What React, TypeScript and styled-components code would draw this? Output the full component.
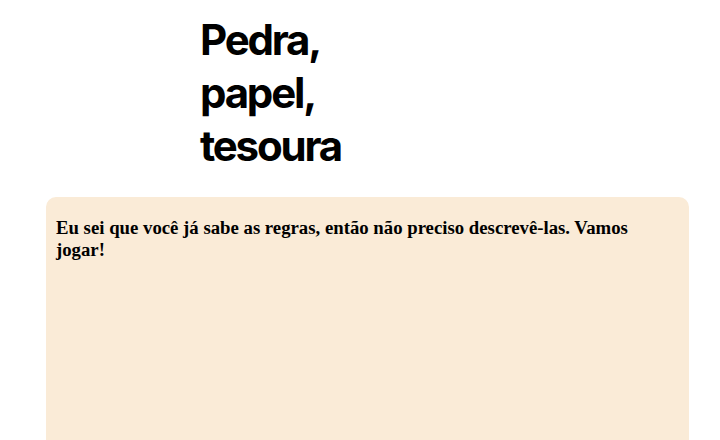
import styled, { createGlobalStyle } from 'styled-components';

const GlobalStyle = createGlobalStyle`
  body {
    margin: 0;
    background: #ffffff;
  }
`;

const Page = styled.main`
  display: flex;
  flex-direction: column;
  padding: 0 31px 0 46px;
`;

const Title = styled.h1`
  margin: 13px 0 0 154px;
  font-family: Inter, 'Liberation Sans', sans-serif;
  font-size: 42px;
  font-weight: 700;
  letter-spacing: -2.2px;
  line-height: 53px;
  color: #000;
`;

const Card = styled.section`
  margin-top: 25px;
  min-height: 240px;
  padding: 20px 10px 17px;
  background: #faebd7;
  border-radius: 10px;
`;

const Intro = styled.p`
  margin: 0;
  font-family: 'Liberation Serif', serif;
  font-size: 18.75px;
  font-weight: 700;
  line-height: 22px;
  color: #000;
`;

export default function App() {
  return (
    <>
      <GlobalStyle />
      <Page>
        <Title>
          Pedra,
          <br />
          papel,
          <br />
          tesoura
        </Title>
        <Card>
          <Intro>
            Eu sei que você já sabe as regras, então não preciso descrevê-las.
            Vamos jogar!
          </Intro>
        </Card>
      </Page>
    </>
  );
}
